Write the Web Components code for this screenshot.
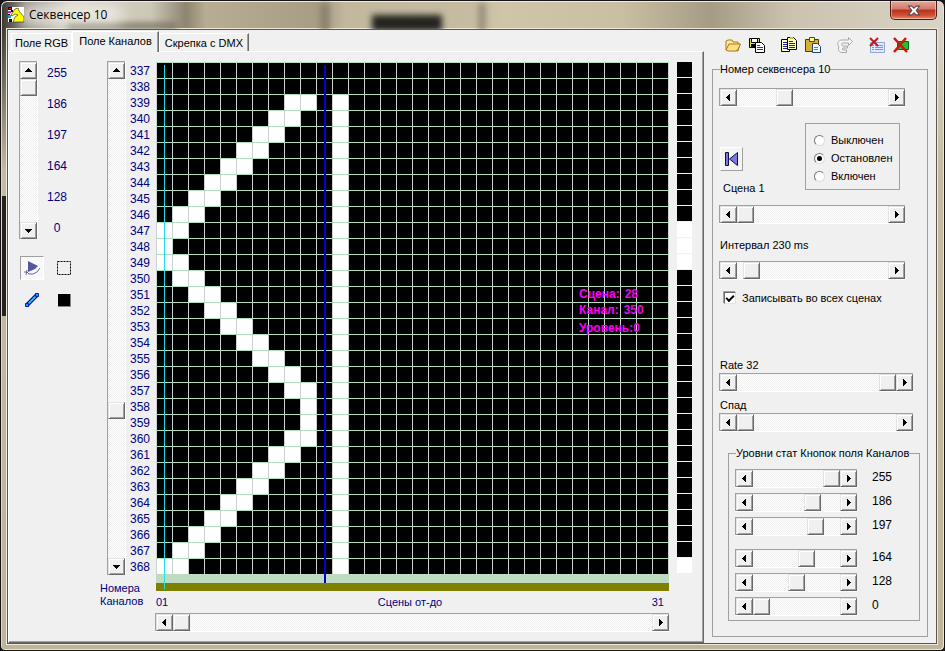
<!DOCTYPE html>
<html lang="ru">
<head>
<meta charset="utf-8">
<title>Секвенсер 10</title>
<style>
  html, body { margin: 0; height: 100%; background: #1a1618; }
  body { font: 11px/14px "Liberation Sans", Arial, sans-serif; color: #000; }
</style>
</head>
<body>
<app-window caption="Секвенсер 10">
  <channel-page></channel-page>
  <control-panel slot="side"></control-panel>
</app-window>

<script>
class Base extends HTMLElement {
  constructor() { super(); this.attachShadow({ mode: "open" }); }
  connectedCallback() {
    if (!this.shadowRoot.childNodes.length) {
      this.shadowRoot.innerHTML = "<style>*{box-sizing:border-box}:host{display:block;box-sizing:border-box}" + this.css() + "</style>" + this.html();
    }
  }
  css() { return ""; }
  html() { return "<slot></slot>"; }
}

/* Classic scroll bar: two arrow buttons around a range input */
customElements.define("scroll-bar", class extends Base {
  css() { return `
    :host { display:flex; height:18px; min-width:60px; border-top:1px solid #a0a0a0; border-left:1px solid #a0a0a0;
      background:repeating-conic-gradient(#fff 0 25%, #eee 0 50%) 0 0/2px 2px; box-shadow:0 1px #fff; }
    :host([vertical]) { flex-direction:column; height:auto; width:18px; min-width:0; box-shadow:1px 0 #fff; }
    button { flex:none; width:17px; height:17px; padding:0; background:#f0f0f0; border:1px solid; border-color:#e3e3e3 #696969 #696969 #e3e3e3;
      box-shadow:inset 1px 1px #fff, inset -1px -1px #a0a0a0; display:grid; place-items:center; }
    svg { display:block; width:7px; height:7px; }
    input { -webkit-appearance:none; appearance:none; flex:1; min-width:0; min-height:0; margin:0; height:17px; background:none; outline:none; }
    :host([vertical]) input { writing-mode:vertical-lr; width:17px; height:auto; }
    input::-webkit-slider-runnable-track { height:17px; }
    :host([vertical]) input::-webkit-slider-runnable-track { height:auto; width:17px; }
    input::-webkit-slider-thumb { -webkit-appearance:none; width:17px; height:17px; background:#f0f0f0; border:1px solid; border-radius:0;
      border-color:#e3e3e3 #696969 #696969 #e3e3e3; box-shadow:inset 1px 1px #fff, inset -1px -1px #a0a0a0; }
    `; }
  html() {
    const v = this.hasAttribute("vertical"), n = this.getAttribute("label") || "";
    const a = v ? ["M0 5h7v-1h-1v-1h-1v-1h-1v-1h-1v1h-1v1h-1v1h-1z", "M0 2h7v1h-1v1h-1v1h-1v1h-1v-1h-1v-1h-1v-1h-1z"]
                : ["M5 0v7h-1v-1h-1v-1h-1v-1h-1v-1h1v-1h1v-1h1v-1z", "M2 0v7h1v-1h1v-1h1v-1h1v-1h-1v-1h-1v-1h-1v-1z"];
    const b = (d, t) => `<button type="button" aria-label="${n}: ${t}"><svg viewBox="0 0 7 7" shape-rendering="crispEdges"><path d="${d}"/></svg></button>`;
    return b(a[0], "меньше") + `<input type="range" step="any" min="0" max="${this.getAttribute("max") || 100}" value="${this.getAttribute("value") || 0}" aria-label="${n}">` + b(a[1], "больше");
  }
});

/* Etched group box */
customElements.define("group-box", class extends Base {
  css() { return `
    fieldset { margin:0; min-width:0; padding:0; border:1px solid #a0a0a0; box-shadow:none; }
    legend { margin-left:7px; padding:0; height:14px; white-space:nowrap; }`; }
  html() { return `<fieldset><legend>${this.getAttribute("label")}</legend><slot></slot></fieldset>`; }
});

customElements.define("app-window", class extends Base {
  css() { return `
    :host { display:flex; flex-direction:column; min-height:100vh; padding:0 7px 6px 6px; border-radius:7px 7px 5px 5px;
      border:1px solid #161316; background:
      linear-gradient(#26221f,#26221f) 0 195px/5px 120px no-repeat,
      linear-gradient(180deg,transparent 0,transparent 30px,#c5bba2 170px,#beb499 100%),
      linear-gradient(90deg,#3a3733 0,#8f8a80 25px,#d9d5ca 70px,#cdc7b6 150px,#8e8570 185px,#b7ad93 205px,#a79d84 320px,#c2b89e 345px,#c6bca2 480px,#cfc5a9 500px,#c9bfa3 620px,#a59c86 710px,#cbc3ae 790px,#d8d3c6 100%);
      box-shadow:inset 0 1px #f1eee6, inset 1px 0 #ded8c8, inset -1px -1px #eae5d6; }
    header { position:relative; display:flex; align-items:center; height:28px; padding-left:1px; gap:5px; overflow:hidden; }
    .smudge { position:absolute; left:365px; top:14px; width:70px; height:16px; background:#24231f; filter:blur(3px); }
    .smudge.b { left:472px; top:2px; width:6px; height:28px; background:#8f8772; }
    .smudge.c { left:60px; top:22px; width:110px; height:6px; background:#77725f; }
    .smudge.d { left:314px; top:2px; width:8px; height:28px; background:#857d69; }
    .glow { position:absolute; left:14px; top:4px; width:100px; height:20px; background:#f4f2ecbb; filter:blur(7px); }
    h1 { position:relative; margin:0; font:12px/16px "Open Sans", "Noto Sans", sans-serif; flex:1; }
    .logo { position:relative; width:16px; height:16px; }
    .close { align-self:flex-start; width:47px; height:19px; padding:0; border:1px solid #4e1a15; border-top:0; border-radius:0 0 5px 5px;
      background:linear-gradient(#e3a99b,#d0796a 45%,#b8301c 50%,#cf5233 80%,#e38b6d); box-shadow:inset 0 0 0 1px #ffffff66; display:grid; place-items:center; }
    main { flex:1; display:flex; background:#f0f0f0; border:1px solid #5a564e; box-shadow:0 0 0 1px #efeadb; }
    .body { flex:1; min-width:0; display:flex; flex-direction:column; }
    ::slotted([slot=side]) { flex:none; width:232px; }
    nav { display:flex; align-items:flex-end; height:21px; padding-left:3px; }
    nav button { font:inherit; height:18px; padding:0 5px; background:#f0f0f0; border:1px solid; border-color:#fff #696969 transparent #fff; white-space:nowrap;
      box-shadow:inset -1px 0 #a0a0a0; border-bottom:0; }
    nav button:first-child { border-right-color:#fff; box-shadow:none; padding:0 3px; }
    nav button[aria-selected=true] { height:21px; padding:0 6px 3px; margin-bottom:-1px; z-index:1; position:relative; }
    .page { flex:1; border:1px solid; border-color:#fff #696969 #696969 #fff; box-shadow:inset -1px -1px #a0a0a0; padding:9px 11px 10px 10px; }`; }
  html() { return `
    <header><span class="smudge"></span><span class="smudge b"></span><span class="smudge c"></span><span class="smudge d"></span><span class="glow"></span>
      <svg class="logo" viewBox="0 0 16 16"><path fill="#fff" d="M0 0h16v15H0z"/><path fill="#ff0" stroke="#222" stroke-width=".6" d="M3 8l4-6 3-1 1 3 5 6v5H5l2-5 3-2-3-1-3 2z"/>
        <path fill="#111" d="M0 0h4v3H0zM1 12h3v3H1z"/><path fill="#e11" d="M1 1h2v1H1z"/><path fill="#e0e" d="M0 4h3v2H0z"/><path fill="#0aa" d="M0 8h3v3H0z"/><path fill="#111" d="M3 3h2v2H3zM0 7h2v1H0z"/></svg>
      <h1>${this.getAttribute("caption")}</h1>
      <button class="close" type="button" aria-label="Закрыть"><svg width="14" height="11" viewBox="0 0 12 10"><path d="M1 1h3l2 2 2-2h3L8 5l3 4H8L6 7 4 9H1l3-4z" fill="#fff" stroke="#5a4a55" stroke-width="1"/></svg></button>
    </header>
    <main>
      <div class="body">
        <nav role="tablist"><button role="tab" aria-selected="false">Поле RGB</button><button role="tab" aria-selected="true">Поле Каналов</button><button role="tab" aria-selected="false">Скрепка с DMX</button></nav>
        <section class="page" role="tabpanel"><slot></slot></section>
      </div>
      <slot name="side"></slot>
    </main>`; }
});

const lit = [[],[],[8,9],[7,8],[6,7],[5,6],[4,5],[3,4],[2,3],[1,2],[0,1],[0],[0,1],[1,2],[2,3],[3,4],[4,5],[5,6],[6,7],[7,8],[8,9],[9],[9],[8,9],[7,8],[6,7],[5,6],[4,5],[3,4],[2,3],[1,2],[0,1]];

customElements.define("channel-grid", class extends Base {
  css() { return `
    :host { position:relative; height:529px; }
    svg { display:block; width:100%; height:529px; }
    dl { position:absolute; right:24px; top:224px; margin:0; width:66px; font-size:12px; font-weight:bold; line-height:16px; color:#f0f; white-space:nowrap; }
    dl div { display:flex; gap:5px; } dl div:last-child { gap:0; margin-top:2px; } dd { margin:0; color:#e010e0; }`; }
  html() {
    let s = "";
    lit.forEach((cols, r) => { for (const c of r > 1 ? [...cols, 11] : cols) s += `M${c * 16} ${r * 16}h16v16h-16z`; });
    return `<svg shape-rendering="crispEdges" role="img" aria-label="Поле каналов">
      <defs><pattern id="lines" width="16" height="16" patternUnits="userSpaceOnUse"><rect width="1" height="16" fill="#cbd5cb"/><rect width="16" height="1" fill="#b0dcc0"/></pattern></defs>
      <rect width="100%" height="512"/><path fill="#fff" d="${s}"/><rect width="100%" height="512" fill="url(#lines)"/>
      <rect y="512" width="100%" height="9" fill="#c0dcc0"/><rect y="521" width="100%" height="8" fill="#808000"/>
      <rect x="8" y="3" width="1" height="524" fill="#20e0e0"/><rect x="168" y="3" width="2" height="518" fill="#0000d0"/></svg>
      <dl><div><dt>Сцена:</dt><dd>28</dd></div><div><dt>Канал:</dt><dd>350</dd></div><div><dt>Уровень:</dt><dd>0</dd></div></dl>`;
  }
});

customElements.define("scene-strip", class extends Base {
  css() { return `:host{display:grid;grid-auto-rows:15px;gap:1px;align-content:start} i{background:#000} i.on{background:#fff}`; }
  html() { return lit.map(c => `<i${c.includes(0) ? ' class="on"' : ""}></i>`).join(""); }
});

customElements.define("level-tools", class extends Base {
  css() { return `
    .levels { display:flex; gap:10px; height:178px; }
    ol { list-style:none; margin:0; padding:5px 0 0; color:navy; font-size:12px; line-height:14px; display:flex; flex-direction:column; gap:17px; }
    li { width:20px; text-align:center; }
    .tools { display:grid; grid-template-columns:24px 24px; gap:8px; padding:17px 0 0 1px; }
    button { width:24px; height:24px; padding:0; border:1px solid transparent; background:none; display:grid; place-items:center; }
    button.on { border-color:#a0a0a0 #fff #fff #a0a0a0; background:#f8f8f8; }`; }
  html() { return `
    <div class="levels"><scroll-bar vertical label="Уровень"></scroll-bar><ol>${[255,186,197,164,128,0].map(n => `<li>${n}</li>`).join("")}</ol></div>
    <div class="tools">
      <button class="on" type="button" aria-label="Воспроизвести"><svg width="18" height="16" viewBox="0 0 18 16"><path fill="#5555a0" d="M5 1l10 5-3 3-7 3z"/><path d="M1 12h3l2 2h4l4-2 3-4M4 10l-1 5" fill="none" stroke="#66a"/></svg></button>
      <button type="button" aria-label="Выделить область"><svg width="14" height="14" viewBox="0 0 14 14"><path d="M.5 .5h13v13H.5z" fill="none" stroke="#000" stroke-dasharray="2 1"/></svg></button>
      <button type="button" aria-label="Линия"><svg width="16" height="16" viewBox="0 0 16 16"><path d="M3 13L13 3" stroke="#000070" stroke-width="4"/><path d="M3 13L13 3" stroke="#20b8ff" stroke-width="2"/><path d="M1.500 11.500h3v3h-3zM11.500 1.500h3v3h-3z" fill="#29f" stroke="#0020c0"/></svg></button>
      <button type="button" aria-label="Цвет"><svg width="14" height="14" viewBox="0 0 14 14"><path fill="#888" d="M1 1h13v13H1z"/><path d="M1 1h12v12H1z"/></svg></button>
    </div>`; }
});

customElements.define("channel-page", class extends Base {
  css() { return `
    :host { display:grid; grid-template-columns:81px 56px 1fr 15px; font-size:12px; color:navy; }
    .channels { display:grid; grid-template-columns:18px auto; justify-content:end; column-gap:5px; align-content:start; }
    .channels scroll-bar { height:514px; }
    ol { list-style:none; margin:0; padding:2px 0 0; line-height:16px; width:26px; }
    .caption { grid-column:1/3; justify-self:start; margin-left:-7px; margin-top:7px; font-size:11px; line-height:13px; width:50px; }
    channel-grid { margin-top:1px; }
    .range { display:flex; justify-content:space-between; height:22px; font-size:11px; line-height:22px; padding-right:5px; }
    scene-strip { margin-top:1px; }
    .mid { min-width:0; padding-right:8px; }
    .mid > scroll-bar { margin-left:-1px; }`; }
  html() {
    let rows = "";
    for (let n = 337; n < 369; n++) rows += `<li>${n}</li>`;
    return `<level-tools></level-tools>
      <div class="channels"><scroll-bar vertical label="Каналы" max="462" value="323"></scroll-bar><ol>${rows}</ol><div class="caption">Номера Каналов</div></div>
      <div class="mid"><channel-grid></channel-grid><div class="range"><output>01</output><span>Сцены от-до</span><output>31</output></div><scroll-bar label="Сцены от-до"></scroll-bar></div>
      <scene-strip></scene-strip>`;
  }
});

customElements.define("tool-bar", class extends Base {
  css() { return `
    :host { display:flex; height:32px; padding:5px 0 0 11px; gap:4px; }
    button { width:20px; height:20px; padding:0; border:0; background:none; display:grid; place-items:center; }
    .gap { margin-left:8px; } svg { display:block; }`; }
  html() {
    const b = (t, c, p) => `<button type="button" class="${c}" aria-label="${t}"><svg width="16" height="16" viewBox="0 0 16 16">${p}</svg></button>`;
    return b("Открыть", "", `<path fill="#ffe9a0" stroke="#a87c20" d="M1 13V4l2-1h4l1 2h5v2l2 0-2 7z"/><path fill="#ffdf80" stroke="#a87c20" d="M1 13l3-6h11.500l-3 6-2 1H3z"/>`)
    + b("Сохранить", "", `<path fill="#dede30" stroke="#000" d="M.5 1.500h10v9H.5z"/><path fill="#fff" stroke="#000" d="M2.500 1.500h6v4h-6z"/><path d="M2 7h6v4H2z"/><path fill="#fff" stroke="#000" d="M6.500 5.500h6l3 3v7h-9z"/><path stroke="#23a" d="M8 8.500h3M8 10.500h6M8 12.500h6"/>`)
    + b("Копировать", "gap", `<path fill="#ffffc8" stroke="#000" d="M.5 2.500h8v12h-8z"/><path stroke="#228" d="M2 5.500h5M2 7.500h5M2 9.500h5M2 11.500h5"/><path fill="#ffffc8" stroke="#000" d="M6.500 .5h6l3 3v9h-9z"/><path stroke="#228" d="M8 4.500h4M8 6.500h6M8 8.500h6M8 10.500h6"/><path fill="#cc2" d="M9 0h3v2H9z"/>`)
    + b("Вставить", "", `<path fill="#d6b030" stroke="#4c3a00" d="M.5 2.500h13v12H.5z"/><path fill="#ff8" stroke="#443" d="M4.500 .5h5v4h-5z"/><path fill="#eff6ff" stroke="#246" d="M7.500 6.500h5l3 3v6h-8z"/><path stroke="#29d" d="M9 10.500h4M9 12.500h4"/>`)
    + b("Повторить", "gap", `<path fill="#f6f6f6" stroke="#a8a8a8" d="M11.500 .5l4 4-4 4V6H6C4 6 4 9 6 9h4.500v2H6c-1 0-1 2 0 2h3.500v2.500H5c-3 0-4.500-3-3-5.500C-.5 7 1 3 5 3h6.500z"/>`)
    + b("Очистить список", "gap", `<path fill="#dfeaff" stroke="#8ea6d8" d="M1.500 5.500h14v10h-14z"/><path stroke="#7c94d0" d="M3 8.500h2M6 8.500h8M3 10.500h2M6 10.500h8M3 12.500h2M6 12.500h8"/><path stroke="#c01818" stroke-width="2" d="M1 1l8 8M9 1L1 9"/>`)
    + b("Удалить", "", `<path fill="#18c828" stroke="#063" d="M4.500 4.500h11v8h-11z"/><path stroke="#d81010" stroke-width="2.500" d="M1 1l13 14M13 1L1 15"/>`);
  }
});

customElements.define("control-panel", class extends Base {
  css() { return `
    :host { padding:0 8px 5px 8px; }
    .form { display:flex; flex-direction:column; padding:12px 14px 15px 6px; }
    .narrow { margin-right:8px; }
    .state { display:flex; justify-content:space-between; margin:17px 13px 0 1px; height:82px; }
    .scene { display:flex; flex-direction:column; }
    .scene button { margin:24px 0 10px; width:23px; height:24px; padding:0; background:#f4f4f4; border:1px solid; border-color:#fff #a0a0a0 #a0a0a0 #fff; display:grid; place-items:center; }
    .scene label { padding-left:3px; }
    .radios { width:95px; height:67px; border:1px solid #a0a0a0; display:flex; flex-direction:column; gap:4px; padding:9px 0 0 8px; }
    .radios label, .check { display:flex; align-items:center; white-space:nowrap; }
    .radios label { gap:6px; height:14px; }
    input { -webkit-appearance:none; appearance:none; margin:0; flex:none; background:#fff; display:grid; place-items:center; }
    input[type=radio] { width:11px; height:11px; border-radius:50%; border:1px solid; border-color:#777 #ddd #ddd #777; }
    input[type=radio]:checked::after { content:""; width:5px; height:5px; border-radius:50%; background:#000; }
    input[type=checkbox] { width:12px; height:12px; border:1px solid; border-color:#696969 #e3e3e3 #e3e3e3 #696969; box-shadow:-1px -1px #a0a0a0; }
    input[type=checkbox]:checked::after { content:""; width:6px; height:3px; border:solid #000; border-width:0 0 2px 2px; transform:translateY(-1px) rotate(-45deg); }
    .check { gap:6px; margin:12px 0 0 5px; height:14px; }
    .lbl { padding-left:1px; }
    .i { margin:15px 0 9px; } .r { margin:53px 0 1px; } .d { margin:7px 0 1px; }
    .stat { margin:15px -7px 0 9px; }
    .rows { display:flex; flex-direction:column; gap:6px; padding:9px 0 5px 6px; }
    .row { display:flex; gap:15px; font-size:12px; line-height:16px; height:18px; } .row scroll-bar { width:122px; } .row:nth-child(4) { margin-top:8px; }`; }
  html() {
    const row = n => `<div class="row"><scroll-bar label="Уровень" max="255" value="${n}"></scroll-bar><output>${n}</output></div>`;
    return `<tool-bar></tool-bar>
    <group-box label="Номер секвенсера 10"><div class="form">
      <scroll-bar class="narrow" label="Номер секвенсера" max="134" value="39"></scroll-bar>
      <div class="state">
        <div class="scene"><button type="button" id="rw" aria-label="В начало"><svg width="13" height="14" viewBox="0 0 13 14"><path fill="#77e" stroke="#113" d="M.5 .5h3v13h-3zM12.500 .5v13L4.500 7z"/></svg></button><label for="rw">Сцена 1</label></div>
        <div class="radios"><label><input type="radio" name="s">Выключен</label><label><input type="radio" name="s" checked>Остановлен</label><label><input type="radio" name="s">Включен</label></div>
      </div>
      <scroll-bar class="narrow" label="Сцена"></scroll-bar>
      <span class="lbl i">Интервал 230 ms</span>
      <scroll-bar class="narrow" label="Интервал" max="134" value="6"></scroll-bar>
      <label class="check"><input type="checkbox" checked>Записывать во всех сценах</label>
      <span class="lbl r">Rate 32</span>
      <scroll-bar label="Rate" value="100"></scroll-bar>
      <span class="lbl d">Спад</span>
      <scroll-bar label="Спад"></scroll-bar>
      <group-box class="stat" label="Уровни стат Кнопок поля Каналов"><div class="rows">${[255,186,197,164,128,0].map(row).join("")}</div></group-box>
    </div></group-box>`;
  }
});
</script>
</body>
</html>
